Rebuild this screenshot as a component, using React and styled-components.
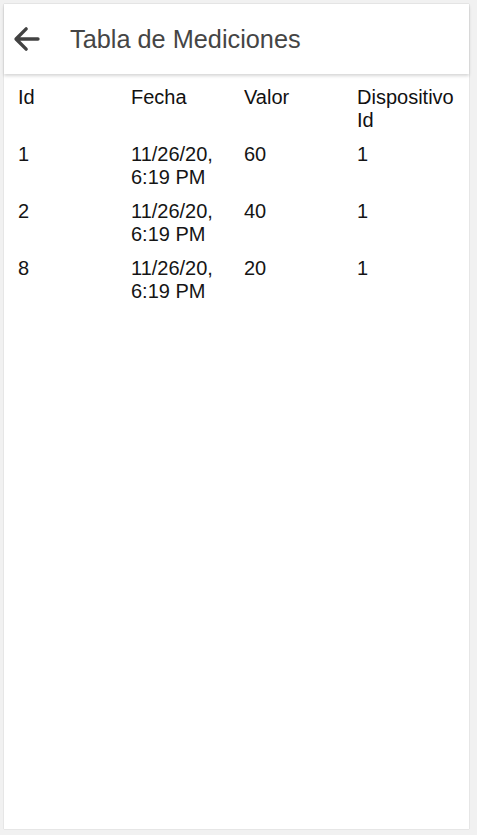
import { Fragment } from "react";
import styled, { createGlobalStyle } from "styled-components";

const GlobalStyle = createGlobalStyle`
  html, body {
    margin: 0;
    padding: 0;
    background: #f1f1f1;
  }
  body {
    font-family: "Liberation Sans", Arial, sans-serif;
  }
`;

const Page = styled.div`
  padding: 4px 8px 6px 4px;
  box-sizing: border-box;
  height: 835px;
`;

const Card = styled.div`
  height: 825px;
  background: #fff;
  box-shadow: 0 0 1px rgba(0, 0, 0, 0.25);
  display: flex;
  flex-direction: column;
`;

const Toolbar = styled.header`
  height: 70px;
  display: flex;
  align-items: center;
  position: relative;
  box-shadow: 0 2px 3px rgba(0, 0, 0, 0.16);
  z-index: 1;
`;

const BackButton = styled.button`
  border: 0;
  background: transparent;
  padding: 0;
  margin-left: 5px;
  width: 36px;
  height: 36px;
  display: flex;
  align-items: center;
  justify-content: center;
  color: #424242;
  cursor: pointer;
`;

const Title = styled.h1`
  margin: 0 0 0 25px;
  font-size: 25.3px;
  font-weight: 400;
  color: #454545;
`;

const Table = styled.div`
  display: grid;
  grid-template-columns: repeat(4, 113px);
  padding: 6px 0 0 14px;
`;

const Cell = styled.div`
  padding: 6px 0 5px;
  font-size: 20px;
  line-height: 23px;
  color: ${(p) => (p.$head ? "#111" : "#151515")};
`;

const rows = [
  { id: 1, fecha: "11/26/20, 6:19 PM", valor: 60, dispositivo: 1 },
  { id: 2, fecha: "11/26/20, 6:19 PM", valor: 40, dispositivo: 1 },
  { id: 8, fecha: "11/26/20, 6:19 PM", valor: 20, dispositivo: 1 },
];

function ArrowBack() {
  return (
    <svg width="36" height="36" viewBox="0 0 512 512" fill="none">
      <path
        d="M244 400L100 256l144-144M120 256h292"
        stroke="currentColor"
        strokeWidth="48"
        strokeLinecap="round"
        strokeLinejoin="round"
      />
    </svg>
  );
}

export default function App() {
  return (
    <>
      <GlobalStyle />
      <Page>
        <Card>
          <Toolbar>
            <BackButton aria-label="back">
              <ArrowBack />
            </BackButton>
            <Title>Tabla de Mediciones</Title>
          </Toolbar>
          <Table>
            <Cell $head>Id</Cell>
            <Cell $head>Fecha</Cell>
            <Cell $head>Valor</Cell>
            <Cell $head>Dispositivo Id</Cell>
            {rows.map((r) => (
              <Fragment key={r.id}>
                <Cell>{r.id}</Cell>
                <Cell>{r.fecha}</Cell>
                <Cell>{r.valor}</Cell>
                <Cell>{r.dispositivo}</Cell>
              </Fragment>
            ))}
          </Table>
        </Card>
      </Page>
    </>
  );
}
